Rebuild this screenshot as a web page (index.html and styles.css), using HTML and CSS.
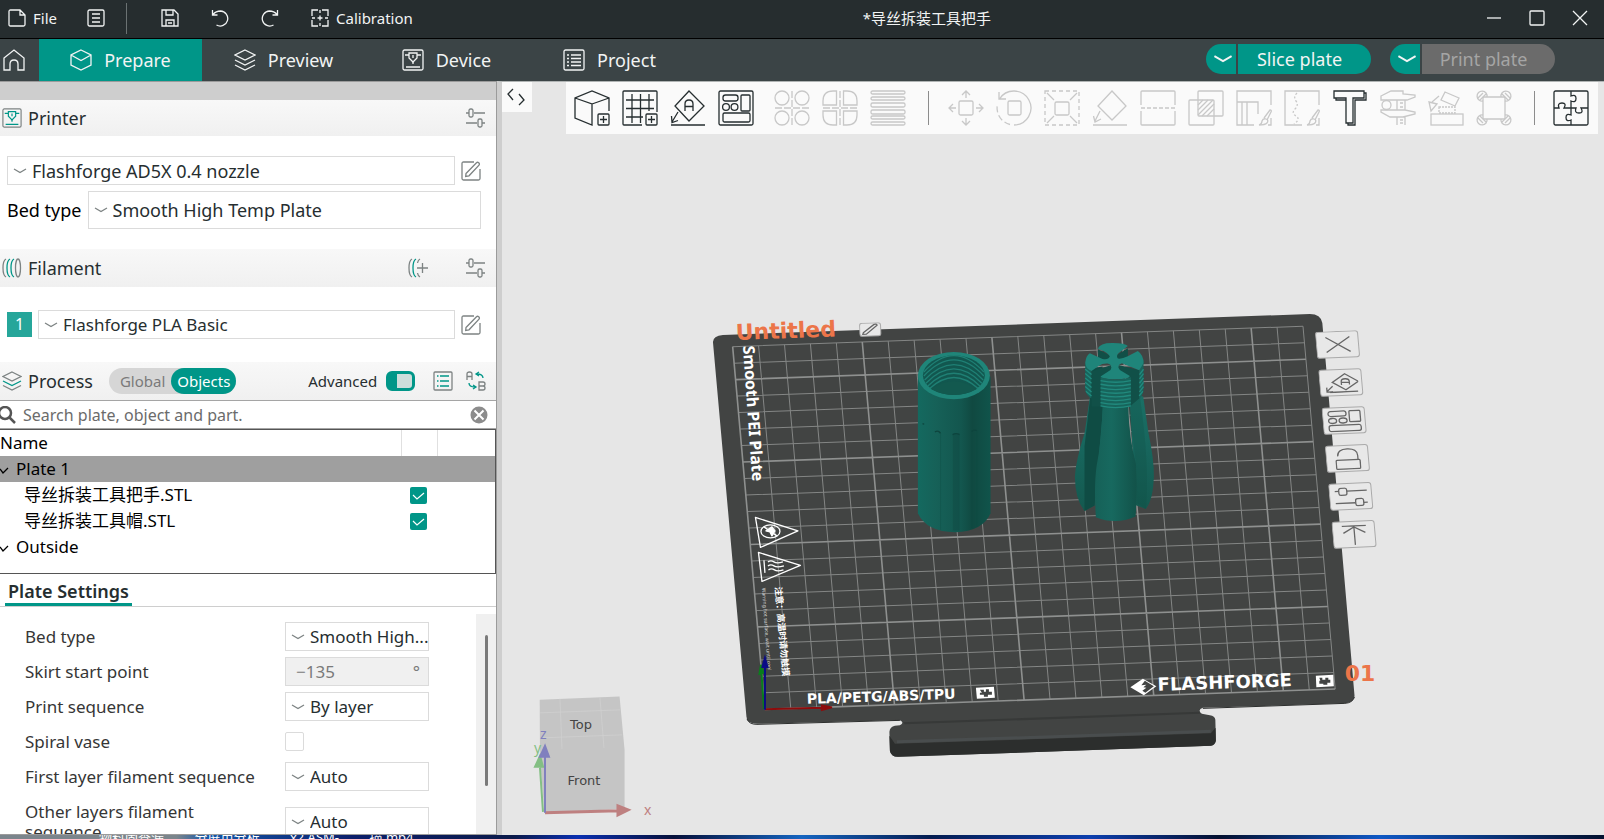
FILE: index.html
```html
<!DOCTYPE html>
<html lang="en">
<head>
    <meta charset="UTF-8">
    <meta name="viewport" content="width=device-width, initial-scale=1.0">
    <title>*导丝拆装工具把手</title>
    <link rel="stylesheet" href="styles.css">
</head>
<body>
<svg class="defs" aria-hidden="true">
    <symbol id="chevron" viewBox="0 0 14 8"><path d="M1 2l6 3.500L13 2"/></symbol>
    <symbol id="sliders" viewBox="0 0 20 20"><path d="M0 5h3M8 5h11M0 15h11M16 15h3"/><rect x="3" y="1" width="4" height="8" rx="1.500"/><rect x="12" y="11" width="4" height="8" rx="1.500"/></symbol>
    <symbol id="edit" viewBox="0 0 20 20"><path d="M13 1H2.500Q1 1 1 2.500v15Q1 19 2.500 19h15q1.500 0 1.500-1.500V8"/><path d="M5 12.500L15.500 1.800q1-1 2.200 0t.3 2.400L8 14.800l-3.300.6z"/></symbol>
    <symbol id="orient" viewBox="0 0 36 36"><path d="M19 1l15 15-15 15L5 16zM1 35h34M8 22l-6 10M1.500 26l.5 6.500 6-2"/><path d="M15 21v-7q0-4 4-4t4 4v7M15 16.500h8"/></symbol>
    <symbol id="arrange" viewBox="0 0 36 36"><rect x="1" y="1" width="34" height="34" rx="1.500"/><rect x="5" y="5" width="15" height="6" rx="2.500"/><rect x="23" y="5" width="9" height="16" rx="1"/><circle cx="8" cy="17" r="3.400"/><circle cx="16.500" cy="17" r="3.400"/><rect x="5" y="23" width="27" height="9" rx="1.500"/></symbol>
    <symbol id="printer" viewBox="0 0 22 22"><rect x="1" y="1" width="20" height="20" rx="1.500"/><g class="accent"><path d="M3 6h4M15 6h4M7 4h8v5l-4 4-4-4zM4 18h14"/><path d="M11 6v3M11 13v2"/></g></symbol>
</svg>

<header class="titlebar">
    <button class="menu-item"><svg class="icon" width="18" height="18" viewBox="0 0 18 18"><path d="M1 2.500Q1 1 2.500 1H12l5 5v9.500q0 1.500-1.500 1.500h-13Q1 17 1 15.500zM12 1v5h5"/></svg>File</button>
    <button class="menu-item list" aria-label="Menu"><svg class="icon" width="18" height="18" viewBox="0 0 18 18"><rect x="1" y="1" width="16" height="16" rx="1.500"/><path d="M5 5h8M5 9h8M5 13h8"/></svg></button>
    <span class="divider"></span>
    <div class="quick">
        <button aria-label="Save"><svg class="icon" width="18" height="18" viewBox="0 0 18 18"><path d="M1 1h12l4 4v12H1zM5 1v5h7V1M5 17v-6h8v6M7 14h4"/></svg></button>
        <button aria-label="Undo"><svg class="icon" width="18" height="18" viewBox="0 0 18 18"><path d="M1.500 1v5h5M2 5.500Q5 2 9.500 2a7.500 7.500 0 1 1-4 14"/></svg></button>
        <button aria-label="Redo"><svg class="icon" width="18" height="18" viewBox="0 0 18 18"><path d="M16.500 1v5h-5M16 5.500Q13 2 8.500 2a7.500 7.500 0 1 0 4 14"/></svg></button>
    </div>
    <button class="menu-item"><svg class="icon" width="18" height="18" viewBox="0 0 18 18"><path d="M7 1H1v6M11 1h6v6M7 17H1v-6M11 17h6v-6M9 1v3M9 14v3M1 9h3M14 9h3M9 6.500v5M6.500 9h5"/></svg>Calibration</button>
    <h1>*导丝拆装工具把手</h1>
    <div class="window-controls">
        <button aria-label="Minimize"><svg class="icon" width="16" height="16" viewBox="0 0 16 16"><path d="M1 8h14"/></svg></button>
        <button aria-label="Maximize"><svg class="icon" width="16" height="16" viewBox="0 0 16 16"><rect x="1" y="1" width="14" height="14" rx="1"/></svg></button>
        <button aria-label="Close"><svg class="icon" width="16" height="16" viewBox="0 0 16 16"><path d="M1 1l14 14M15 1L1 15"/></svg></button>
    </div>
</header>

<nav class="tabs">
    <button class="home" aria-label="Home"><svg class="icon" width="22" height="22" viewBox="0 0 22 22"><path d="M1 9l10-8 10 8v12h-6v-6q0-4-4-4t-4 4v6H1z"/></svg></button>
    <button class="tab active"><svg class="icon" width="22" height="22" viewBox="0 0 22 22"><path d="M11 1l10 5v10l-10 5-10-5V6zM1 6l10 5.500L21 6"/></svg>Prepare</button>
    <button class="tab"><svg class="icon" width="22" height="22" viewBox="0 0 22 22"><path d="M11 1l10 5-10 5L1 6zM1 11l10 5 10-5M1 16l10 5 10-5"/></svg>Preview</button>
    <button class="tab"><svg class="icon" width="22" height="22"><use href="#printer"/></svg>Device</button>
    <button class="tab"><svg class="icon" width="22" height="22" viewBox="0 0 22 22"><rect x="1" y="1" width="20" height="20" rx="1.500"/><path d="M4 6h2M8 6h10M4 9.500h2M8 9.500h10M4 13h2M8 13h10M4 16.500h2M8 16.500h10"/></svg>Project</button>
    <div class="actions">
        <div class="split">
            <button class="more" aria-label="Slice options"><svg class="icon" width="20" height="12"><use href="#chevron"/></svg></button>
            <button class="main">Slice plate</button>
        </div>
        <div class="split">
            <button class="more" aria-label="Print options"><svg class="icon" width="20" height="12"><use href="#chevron"/></svg></button>
            <button class="main" disabled>Print plate</button>
        </div>
    </div>
</nav>

<main class="workspace">
    <aside class="sidebar">
        <header class="section first">
            <svg class="icon" width="20" height="20"><use href="#printer"/></svg>
            <h2>Printer</h2>
            <button class="end" aria-label="Printer settings"><svg class="icon" width="20" height="20"><use href="#sliders"/></svg></button>
        </header>
        <div class="presets printer">
            <div class="row">
                <span class="combo"><svg class="icon" width="14" height="8"><use href="#chevron"/></svg><select aria-label="Printer preset"><option>Flashforge AD5X 0.4 nozzle</option></select></span>
                <button aria-label="Edit printer"><svg class="icon" width="20" height="20"><use href="#edit"/></svg></button>
            </div>
            <div class="row bed">
                <label for="bed">Bed type</label>
                <span class="combo tall"><svg class="icon" width="14" height="8"><use href="#chevron"/></svg><select id="bed"><option>Smooth High Temp Plate</option></select></span>
            </div>
        </div>

        <header class="section filament">
            <svg class="icon" width="20" height="20" viewBox="0 0 20 20"><path d="M4 1C0 3 0 17 4 19"/><path class="accent" d="M8 1C4 3 4 17 8 19M12 1C8 3 8 17 12 19"/><ellipse cx="16" cy="10" rx="2.500" ry="9"/></svg>
            <h2>Filament</h2>
            <button class="end" aria-label="Add filament"><svg class="icon" width="20" height="20" viewBox="0 0 20 20"><path d="M4 1C0 3 0 17 4 19M12 1q-2 1-2.500 4M12 19q-2-1-2.500-4M9 10h11M14.500 5v10"/><path class="accent" d="M8 1C4 3 4 17 8 19"/></svg></button>
            <button class="far" aria-label="Filament settings"><svg class="icon" width="20" height="20"><use href="#sliders"/></svg></button>
        </header>
        <div class="presets">
            <div class="row">
                <span class="badge">1</span>
                <span class="combo"><svg class="icon" width="14" height="8"><use href="#chevron"/></svg><select aria-label="Filament preset"><option>Flashforge PLA Basic</option></select></span>
                <button aria-label="Edit filament"><svg class="icon" width="20" height="20"><use href="#edit"/></svg></button>
            </div>
        </div>

        <header class="section process">
            <svg class="icon" width="20" height="20" viewBox="0 0 20 20"><path d="M10 1l9 4.500-9 4.500-9-4.500zM1 14.500l9 4.500 9-4.500"/><path class="accent" d="M1 10l9 4.500 9-4.500"/></svg>
            <h2>Process</h2>
            <div class="scope"><button>Global</button><button class="on">Objects</button></div>
            <label class="end advanced">Advanced <input type="checkbox" checked></label>
            <button class="list" aria-label="Parameter list"><svg class="icon" width="20" height="20" viewBox="0 0 20 20"><rect x="1" y="1" width="18" height="18" rx="1"/><path class="accent" d="M4 5h1.500M7 5h9M4 10h1.500M7 10h9M4 15h1.500M7 15h9"/></svg></button>
            <button class="compare" aria-label="Compare presets"><svg class="icon" width="20" height="20" viewBox="0 0 20 20"><path d="M1 9V3q0-2 2.500-2T6 3v6M1 5.500h5M13 11h4q2 0 2 2t-2 2h-4zM13 15h4q2 0 2 2t-2 2h-4z"/><path class="accent" d="M17 7q0-4-6-4M13 1l-3 2 3 2M3 12q0 4 6 4M7 14l3 2-3 2"/></svg></button>
        </header>

        <div class="search">
            <svg class="icon" width="18" height="18" viewBox="0 0 18 18"><circle cx="7" cy="7" r="6"/><path d="M11 11l6 6"/></svg>
            <input type="text" placeholder="Search plate, object and part." aria-label="Search">
            <button aria-label="Clear"><svg class="icon" width="20" height="20" viewBox="0 0 20 20"><circle cx="10" cy="10" r="9.500"/><path d="M5.500 5.500l9 9M14.500 5.500l-9 9"/></svg></button>
        </div>

        <div class="tree">
            <table>
                <thead>
                <tr><th>Name</th><th class="col-print"></th><th class="col-edit"></th></tr>
                </thead>
                <tbody>
                <tr class="selected"><td class="group"><svg class="icon" width="9" height="8" viewBox="0 0 9 8"><path d="M0 2l3 4 5-5"/></svg>Plate 1</td><td></td><td></td></tr>
                <tr><td class="object">导丝拆装工具把手.STL</td><td><input type="checkbox" checked aria-label="Print 导丝拆装工具把手.STL"></td><td></td></tr>
                <tr><td class="object">导丝拆装工具帽.STL</td><td><input type="checkbox" checked aria-label="Print 导丝拆装工具帽.STL"></td><td></td></tr>
                <tr><td class="group"><svg class="icon" width="9" height="8" viewBox="0 0 9 8"><path d="M0 2l3 4 5-5"/></svg>Outside</td><td></td><td></td></tr>
                </tbody>
            </table>
        </div>

        <div class="settings-tabs"><button>Plate Settings</button></div>
        <div class="settings">
            <div class="fields">
                <label for="s-bed">Bed type</label>
                <span class="combo"><svg class="icon" width="14" height="8"><use href="#chevron"/></svg><select id="s-bed"><option>Smooth High...</option></select></span>
                <label for="s-skirt">Skirt start point</label>
                <span class="combo off"><input id="s-skirt" type="text" value="−135" disabled><span class="unit">°</span></span>
                <label for="s-seq">Print sequence</label>
                <span class="combo"><svg class="icon" width="14" height="8"><use href="#chevron"/></svg><select id="s-seq"><option>By layer</option></select></span>
                <label for="s-vase">Spiral vase</label>
                <input id="s-vase" type="checkbox">
                <label for="s-first">First layer filament sequence</label>
                <span class="combo"><svg class="icon" width="14" height="8"><use href="#chevron"/></svg><select id="s-first"><option>Auto</option></select></span>
                <label for="s-other">Other layers filament sequence</label>
                <span class="combo"><svg class="icon" width="14" height="8"><use href="#chevron"/></svg><select id="s-other"><option>Auto</option></select></span>
            </div>
            <div class="scrollbar"><span></span></div>
        </div>
    </aside>

    <section class="viewport">
        <svg class="scene" viewBox="502 82 1102 752" preserveAspectRatio="xMinYMin meet">
            <defs>
                <linearGradient id="tube"><stop offset="0" stop-color="#14695f"/><stop offset=".25" stop-color="#166158"/><stop offset=".6" stop-color="#13564e"/><stop offset=".75" stop-color="#104941"/><stop offset="1" stop-color="#10544b"/></linearGradient>
                <linearGradient id="grip"><stop offset="0" stop-color="#166158"/><stop offset=".4" stop-color="#17695f"/><stop offset="1" stop-color="#125249"/></linearGradient>
                <linearGradient id="wing" x2="0" y2="1"><stop offset="0" stop-color="#1a7066"/><stop offset=".5" stop-color="#17655c"/><stop offset="1" stop-color="#14594f"/></linearGradient>
            </defs>

            <!-- build plate -->
            <path fill="#424443" d="M713 342Q713 336 723 335L1310 314Q1321 314 1322.500 323L1354.700 696Q1354 703 1345 703.500L1203 708Q1197 710 1202 714L1210 715.500Q1215 716 1215.500 720L1216 741Q1215 745.500 1211 746L898 757Q891 757 890 751L889.500 732Q890 727 895 726L900 725.500Q905 723 900 720.300L757 724Q747 724 746.500 717z"/>
            <path fill="#373938" d="M903 722.500L1200 712v2L905 724.500z"/>
            <path fill="#2c2e2d" d="M889.500 736L895 744 1211 733.500 1215.700 728 1216 741Q1215 745.500 1211 746L898 757Q891 757 890 751z"/>
            <path fill="none" stroke="#494d4e" stroke-width="3" d="M897 742L1211 731.500"/>
            <path fill="none" stroke="#2c2e2d" d="M747 719Q749 724.500 757 724.500L900 720.500M1203 708.500L1345 703.500Q1353 703 1354.700 697"/>

            <!-- 10 mm grid, 22 x 22 cells -->
            <g class="grid" transform="matrix(25.930 -.927 1.464 16.490 732.700 346.700)">
                <path d="M0 0H22M0 1H22M0 3H22M0 4H22M0 5H22M0 6H22M0 8H22M0 9H22M0 10H22M0 11H22M0 13H22M0 14H22M0 15H22M0 16H22M0 18H22M0 19H22M0 20H22M0 21H22"/>
                <path d="M1 0V22M2 0V22M3 0V22M4 0V22M6 0V22M7 0V22M8 0V22M9 0V22M11 0V22M12 0V22M13 0V22M14 0V22M16 0V22M17 0V22M18 0V22M19 0V22M21 0V22M22 0V22"/>
                <path class="bold" d="M0 2H22M0 7H22M0 12H22M0 17H22M0 22H22M0 0V22M5 0V22M10 0V22M15 0V22M20 0V22"/>
            </g>

            <text class="plate-name" transform="translate(736 340) rotate(-2)">Untitled</text>
            <text class="plate-number" x="1345" y="681">01</text>
            <text class="plate-type" transform="translate(743 346) rotate(86)">Smooth PEI Plate</text>
            <text class="plate-materials" transform="translate(807 704) rotate(-2)">PLA/PETG/ABS/TPU</text>
            <text class="plate-brand" transform="translate(1158 691) rotate(-2)">FLASHFORGE</text>
            <text class="warning-zh" transform="translate(775 587) rotate(85)">注意：高温时请勿触摸</text>
            <text class="warning-en" transform="translate(762 588) rotate(86)">Warning hot surface, wait until cool</text>

            <!-- warning triangles -->
            <g fill="none" stroke="#fff" stroke-width="1.300" stroke-linejoin="round">
                <path d="M755.500 517.500L798 531 760.500 547.500z"/>
                <ellipse cx="770.500" cy="531.500" rx="9.500" ry="6.500"/>
                <path d="M764 527l13 9"/>
                <path fill="#fff" d="M766 531l6-4 3 4-3 5-2-4z"/>
                <path d="M758.500 552.500L800.500 565.500 762 581.500z"/>
                <path d="M764 560.500l1 12.500M768 562q3-2 6 0t9 0M768 566q3-2 6 0t10 0M768.500 570q3-2 6 0t9 0"/>
            </g>
            <!-- corner marks and brand diamond -->
            <g fill="#fff">
                <path d="M976 688l18-1 1 11-18 1zM1316 676l17.500-1 .5 11.500-17.500 1z"/>
                <path d="M1130.500 687.500L1143 679 1156.500 686.500 1144 695.500z"/>
                <path fill="#424443" d="M1145 681l9 5.500-8.500 6.500-3-2 4-3-3-.5 3-2.500-5 .5z"/>
                <path fill="#424443" d="M980 690h4v2h2v-2.500h3v2.500h3v3h-4v2h-4v-2h-4v-2h2zM1319.500 678h3v2h3v-2h3v2h2v3h-3v2h-4v-1h-4v-3h1z"/>
            </g>

            <!-- sleeve -->
            <g transform="translate(700 300) scale(.3333)">
                <path fill="url(#tube)" d="M654 230V640Q680 696 766 697 850 694 872 640V230z"/>
                <ellipse cx="762" cy="227" rx="108" ry="71" fill="#1f8579"/>
                <ellipse cx="762" cy="226" rx="93" ry="59" fill="#12574f"/>
                <g fill="none" stroke="#1f7f74" stroke-width="4">
                    <path d="M672 216Q762 118 852 216M672 228Q762 132 852 228M674 240Q762 148 850 240M678 250Q762 164 846 250M684 258Q762 182 840 258M690 265Q762 200 834 265"/>
                </g>
                <path fill="#13594f" d="M694 268Q762 220 830 268 762 303 694 268z"/>
                <path fill="#0e453e" d="M759 402q10-4 20 0v290h-20z" opacity=".35"/>
                <path fill="none" stroke="#0e453e" stroke-width="4" d="M705 396q10-6 17 4M758 404q11-6 21 0M815 394q10-6 16-2M668 371l5 2"/>
                <path fill="none" stroke="#0f4a42" stroke-width="3" opacity=".35" d="M722 400V690M830 394V680M816 396V684"/>
            </g>

            <!-- handle -->
            <g transform="translate(1040 300) scale(.3333)">
                <path fill="url(#wing)" d="M152 280L134 400Q108 480 105 530 106 600 134 633L166 616 200 290z"/>
                <path fill="#0f4c44" d="M156 205L150 300 134 440V633L164 617 190 320 188 200z"/>
                <path fill="url(#wing)" d="M268 280L310 290 326 400Q343 480 342 530 340 600 318 627L288 616z"/>
                <path fill="#104f47" d="M264 320L280 420 291 520 292 610 318 627Q330 500 300 290z" opacity=".3"/>
                <path fill="url(#grip)" d="M188 320H265Q268 420 288 490 294 560 287 650 228 676 168 652 162 560 170 500 186 420 188 320z"/>
                <path fill="#17655c" d="M136 190L155 214V296Q142 290 136 272zM311 180L298 210V298Q310 285 311 270z"/>
                <path fill="#115048" d="M155 214L215 195V220L182 236V320H155zM298 210L235 195V215L270 236V320L298 296z"/>
                <path fill="#114f47" d="M174 148L220 172 264 145V176L220 190 174 176z"/>
                <path fill="#1f857a" d="M174 146Q180 128 220 129 255 129 264 138L236 160Q228 168 234 176 246 178 262 170L294 153Q312 166 311 190L298 211 246 190Q228 196 240 210L270 228Q268 238 226 238 184 238 182 230L212 210Q220 196 204 191 188 190 176 198L155 213Q136 206 136 188 138 168 150 160L188 177Q206 180 210 170 204 158 174 146z"/>
                <path fill="#17655c" d="M182 232Q226 246 273 232V318Q226 332 182 318z"/>
                <g fill="none" stroke="#218a7e" stroke-width="4">
                    <path d="M182 242Q227 252 273 242M182 253Q227 263 273 253M182 264Q227 274 273 264M182 275Q227 285 273 275M182 286Q227 296 273 286M182 297Q227 307 273 297M182 308Q227 318 273 308M182 318Q227 328 273 318"/>
                    <path d="M136 208l19 16M136 221l19 16M136 234l19 16M136 247l19 16M136 260l19 16M138 274l17 14M311 208l-12 16M311 221l-12 16M311 234l-12 16M311 247l-12 16M311 260l-12 16M309 274l-11 14"/>
                </g>
            </g>

            <!-- plate axes -->
            <g stroke-width="2">
                <path stroke="#0a7d1c" fill="#0a7d1c" d="M764 709L761.500 673M759.500 674l4-1-2.500-8z"/>
                <path stroke="#8c0c0c" fill="#8c0c0c" d="M765 709.500L822 708M822 705.500v4.500l10-2.500z"/>
                <path stroke="#0b0b86" fill="#0b0b86" d="M765 710V667M762.500 667h5l-2.500-9z"/>
            </g>

            <!-- view cube -->
            <path fill="#c5c5c5" d="M539.700 700L619.600 696.700 624.600 750V809L544.600 813 540 760z"/>
            <path fill="none" stroke="#cfcfcf" stroke-width=".8" d="M540 713l80-3M542 738l80-3M560 699l2 50M600 698l4 50"/>
            <g class="cube-labels"><text x="581" y="729">Top</text><text x="584" y="785">Front</text></g>
            <g stroke-width="2">
                <path stroke="#84bf84" fill="#84bf84" d="M543 812L540 768M535 767h8l-3-11z"/>
                <path stroke="#be8080" fill="#be8080" stroke-width="3" d="M545 813L618 811M618 806v9l10-5z"/>
                <path stroke="#8080be" fill="#8080be" d="M545 813V757M540 757h9l-4-11z"/>
            </g>
            <text class="axis" fill="#8080be" x="540" y="739">z</text>
            <text class="axis" fill="#84bf84" x="534" y="753">y</text>
            <text class="axis" fill="#be8080" x="644" y="815">x</text>

            <foreignObject x="859" y="323" width="26" height="18" transform="rotate(-2 858 322)">
                <button class="rename" aria-label="Rename plate"><svg class="icon" width="18" height="12" viewBox="0 0 18 12"><path d="M2 9L13 1q3-1 3 1L5 10.500H1.500z"/></svg></button>
            </foreignObject>
            <foreignObject width="46" height="224" transform="matrix(1 -.045 .087 1 1315 332)">
                <div class="plate-tools">
                    <button aria-label="Delete plate"><svg class="icon" width="26" height="17" viewBox="0 0 26 17"><path d="M1 1l24 15M25 1L1 16"/></svg></button>
                    <button aria-label="Orient"><svg class="icon" width="34" height="20" viewBox="0 0 34 20"><path d="M21 1l13 8-13 8-13-8zM5 19h28M8 13l-6 5M2 14v4.500h6M17 12V8.500Q17 6 21 6t4 2.500V12M17 9.500h8"/></svg></button>
                    <button aria-label="Arrange"><svg class="icon" width="36" height="22" viewBox="0 0 36 22"><rect x="2" y="1" width="18" height="5" rx="2.500"/><rect x="23" y="1" width="11" height="11" rx="1"/><ellipse cx="6" cy="10.500" rx="4" ry="2.500"/><ellipse cx="16.500" cy="10.500" rx="4" ry="2.500"/><rect x="2" y="15" width="32" height="6" rx="2"/></svg></button>
                    <button aria-label="Lock"><svg class="icon" width="26" height="22" viewBox="0 0 26 22"><rect x="1" y="12" width="24" height="9" rx="1"/><path d="M3 8Q3 1 13 1t10 7v4"/></svg></button>
                    <button aria-label="Plate settings"><svg class="icon" width="34" height="20" viewBox="0 0 34 20"><path d="M1 4h4M13 4h20M1 16h20M29 16h4"/><rect x="5" y="1" width="8" height="7" rx="2"/><rect x="21" y="12" width="8" height="7" rx="2"/></svg></button>
                    <button aria-label="Move to front"><svg class="icon" width="26" height="20" viewBox="0 0 26 20"><path d="M1 1h24M13 1v19M2 8l11-6 11 6"/></svg></button>
                </div>
            </foreignObject>
        </svg>

        <button class="collapse" aria-label="Collapse sidebar"><svg class="icon" width="18" height="18" viewBox="0 0 18 18"><path d="M6 1L1 6l5 6M12 6l5 6-5 5"/></svg></button>
        <div class="toolbar">
            <button aria-label="Add"><svg class="icon" viewBox="0 0 36 36"><path d="M35 21V8L18 1 1 8v20l17 7V14L1 8M18 14l17-6"/><rect x="24" y="24" width="11" height="11" rx="1"/><path d="M29.500 26v7M26 29.500h7"/></svg></button>
            <button aria-label="Add plate"><svg class="icon" viewBox="0 0 36 36"><path d="M20 35H2q-1 0-1-1V2q0-1 1-1h32q1 0 1 1v20M10 4v29M18.500 4v29M27 4v17M4 10h28M4 18.500h28M4 27h17"/><rect x="24" y="24" width="11" height="11" rx="1"/><path d="M29.500 26v7M26 29.500h7"/></svg></button>
            <button aria-label="Auto orient"><svg class="icon"><use href="#orient"/></svg></button>
            <button class="wide" aria-label="Arrange"><svg class="icon"><use href="#arrange"/></svg></button>
            <button disabled aria-label="Split to objects"><svg class="icon" viewBox="0 0 36 36"><circle cx="8" cy="8" r="7"/><circle cx="28" cy="8" r="7"/><circle cx="8" cy="28" r="7"/><circle cx="28" cy="28" r="7"/><path d="M18 1v34M1 18h34" stroke-dasharray="7 2"/></svg></button>
            <button disabled aria-label="Split to parts"><svg class="icon" viewBox="0 0 36 36"><path d="M14.500 1v14H1v-4Q1 1 11 1zM21.500 1v14H35v-4Q35 1 25 1zM14.500 35V21H1v4q0 10 10 10zM21.500 35V21H35v4q0 10-10 10z"/><path d="M18 1v34M1 18h34" stroke-dasharray="7 2"/></svg></button>
            <button disabled aria-label="Variable layer height"><svg class="icon" viewBox="0 0 36 36"><rect x="1" y="1" width="34" height="3" rx="1.500"/><rect x="1" y="7" width="34" height="3" rx="1.500"/><rect x="1" y="13" width="34" height="4" rx="1.500"/><rect x="1" y="20" width="34" height="4" rx="1.500"/><rect x="1" y="26" width="34" height="3" rx="1.500"/><rect x="1" y="32" width="34" height="3" rx="1.500"/></svg></button>
            <span class="divider"></span>
            <button disabled aria-label="Move"><svg class="icon" viewBox="0 0 36 36"><rect x="11" y="11" width="14" height="14" rx="1.500"/><path d="M18 8V1M14 5l4-4 4 4M18 28v7M14 31l4 4 4-4M8 18H1M5 14l-4 4 4 4M28 18h7M31 14l4 4-4 4"/></svg></button>
            <button disabled aria-label="Rotate"><svg class="icon" viewBox="0 0 36 36"><rect x="12" y="11" width="13" height="14" rx="1.500"/><path d="M3 2v7h7M3.500 9A17 17 0 1 1 18 35"/><path d="M14 34.500A17 17 0 0 1 1.500 14" stroke-dasharray="6 3"/></svg></button>
            <button disabled aria-label="Scale"><svg class="icon" viewBox="0 0 36 36"><rect x="11" y="12" width="14" height="13" rx="1.500"/><rect x="1" y="1" width="34" height="34" stroke-dasharray="4 3"/><path d="M3 3l7 7M33 3l-7 7M3 33l7-7M33 33l-7-7"/></svg></button>
            <button disabled aria-label="Lay on face"><svg class="icon" viewBox="0 0 36 36"><path d="M20 1l14 15-14 14L6 16zM1 35h34M8 21L3 31M1.500 26l1.500 6 6-3"/></svg></button>
            <button disabled aria-label="Cut"><svg class="icon" viewBox="0 0 36 36"><path d="M1 15V2q0-1 1-1h32q1 0 1 1v13M1 21v13q0 1 1 1h32q1 0 1-1V21"/><path d="M1 18h34" stroke-dasharray="4 2"/></svg></button>
            <button disabled aria-label="Mesh boolean"><svg class="icon" viewBox="0 0 36 36"><rect x="10" y="1" width="25" height="25" rx="1"/><rect x="1" y="10" width="25" height="25" rx="1"/><path d="M10 15l5-5M10 20l10-10M10 25L25 10M14 26l12-12M19 26l7-7"/></svg></button>
            <button disabled aria-label="Support painting"><svg class="icon" viewBox="0 0 36 36"><path d="M18 35H1V1h34v14M1 12h21v12M6 12v23M11 12v23M35 28v7h-3M23 35q3-1 3-4 1-3 4-2t1 4q-2 2-8 2zM28 28l6-8q2 0 1 2l-4 8"/></svg></button>
            <button disabled aria-label="Seam painting"><svg class="icon" viewBox="0 0 36 36"><path d="M18 35H1V1h34v14M35 28v7h-3M23 35q3-1 3-4 1-3 4-2t1 4q-2 2-8 2zM28 28l6-8q2 0 1 2l-4 8"/><path d="M13 3q-4 4-1 8t-1 8 1 7-2 8" stroke-dasharray="2 2"/></svg></button>
            <button aria-label="Text"><svg class="icon" viewBox="0 0 36 36"><path d="M2 1h30v7H21v25h-7V8H2z"/><path d="M32 3h2v7H23v25h-7v-2M4 8v2h10"/></svg></button>
            <button disabled aria-label="Measure"><svg class="icon" viewBox="0 0 36 36"><path d="M1 6l10-5h12v3l12 1v2l-8 3H1zM1 20h24l10 2v2l-12 3H10L1 22zM17 10v10M25 10v10M17 27v8M25 27v8M20 13h3M20 17h3M20 30h3M20 33h3"/><circle cx="6.500" cy="15" r="4.500"/></svg></button>
            <button disabled aria-label="Assemble faces"><svg class="icon" viewBox="0 0 36 36"><rect x="3" y="24" width="32" height="11"/><path d="M17 2l14 6-4 8-14-6zM1 12l8 2-6 7zM4 12l7-6"/><path d="M11 17h16v6H11z" stroke-dasharray="2 1"/></svg></button>
            <button disabled aria-label="Brim ears"><svg class="icon" viewBox="0 0 36 36"><rect x="7" y="7" width="22" height="22" rx="1"/><path d="M7 11A5 5 0 1 1 11 7M25 7a5 5 0 1 1 4 4M29 25a5 5 0 1 1-4 4M11 29a5 5 0 1 1-4-4M2 8l5-5M4 10l6-6M29 3l5 5M26 4l6 6M34 28l-5 5M32 26l-6 6M2 28l5 5M4 26l6 6"/></svg></button>
            <span class="divider"></span>
            <button aria-label="Assembly view"><svg class="icon" viewBox="0 0 36 36"><rect x="1" y="1" width="34" height="34" rx="1.500"/><path d="M18 1v5q5-2 5 2.500T18 11v14q-5-2-5 2.500t5 2.500v5M1 18h5q-2-5 3-5t2 5h12q-2 5 3 5t2-5h7"/></svg></button>
        </div>
    </section>
</main>
<footer class="desktop">
    <span>物料固查漏...</span><span>分屏用分析...</span><span>x2 ASM-...</span><span>描.mp4</span>
</footer>
</body>
</html>
```
FILE: styles.css
```css
* {
    box-sizing: border-box;
}

body {
    margin: 0;
    height: 100vh;
    display: grid;
    grid-template-rows: 39px 42px minmax(0, 1fr) 4px;
    overflow: hidden;
    font-family: "Noto Sans", "Noto Sans CJK SC", sans-serif;
    font-size: 17px;
    line-height: 24px;
    color: #262e30;
    background: #fff;
}

h1, h2 {
    margin: 0;
    font-weight: 400;
}

button, select, input {
    font: inherit;
    color: inherit;
}

button {
    display: flex;
    align-items: center;
    justify-content: center;
    padding: 0;
    border: none;
    background: none;
    cursor: pointer;
}

.defs {
    position: absolute;
    width: 0;
    height: 0;
}

.icon {
    flex: none;
    fill: none;
    stroke: currentColor;
    stroke-width: 1.3;
}

/* title bar */
.titlebar {
    display: flex;
    align-items: center;
    padding: 0 16px 2px 8px;
    background: #262d2f;
    border-bottom: 1px solid #000;
    color: #f2f4f4;
    font-size: 15px;
}

.menu-item {
    gap: 7px;
}

.menu-item.list {
    margin-left: 30px;
}

.titlebar .divider {
    width: 1px;
    height: 31px;
    margin: 0 34px 0 21px;
    background: #6b7273;
}

.quick {
    display: flex;
    gap: 32px;
    margin-right: 32px;
}

.titlebar h1 {
    flex: 1;
    padding-left: 450px;
    font-size: 15px;
}

.window-controls {
    display: flex;
    gap: 27px;
}

/* main tabs */
.tabs {
    display: flex;
    align-items: stretch;
    background: #3b4446;
    color: #f2f4f4;
    font-size: 18px;
}

.home {
    width: 39px;
    padding-right: 11px;
}

.tab {
    width: 163px;
    gap: 12px;
}

.tab.active {
    background: #009688;
}

.actions {
    display: flex;
    align-items: center;
    gap: 19px;
    margin-left: auto;
    padding: 0 49px 2px 0;
}

.split {
    display: flex;
    gap: 2px;
}

.split button {
    height: 30px;
    background: #009688;
}

.split .more {
    width: 30px;
    padding-left: 4px;
    border-radius: 15px 0 0 15px;
}

.split .main {
    width: 133px;
    padding-right: 10px;
    border-radius: 0 15px 15px 0;
}

.split .main:disabled {
    background: #6b6b6b;
    color: #a5a5a5;
}

/* layout */
.workspace {
    display: flex;
    min-height: 0;
}

.sidebar {
    flex: 0 0 31%;
    display: flex;
    flex-direction: column;
    min-width: 0;
    border: 1px solid #9b9b9b;
    border-left: none;
    background: #fff;
}

.section {
    flex: none;
    display: flex;
    align-items: center;
    height: 38px;
    padding: 0 10px 0 2px;
    background: linear-gradient(#f8f8f8, #f0f0f0);
}

.section.first {
    height: 54px;
    border-top: 18px solid #cecece;
}

.section h2 {
    margin-left: 6px;
    font-size: 18px;
}

.section .icon, .row .icon {
    color: #7d8383;
}

.accent {
    stroke: var(--accent, currentColor);
}

.section {
    --accent: #009688;
}

.end {
    margin-left: auto;
}

.far {
    margin-left: 38px;
}

.presets {
    padding: 23px 15px 23px 7px;
}

.presets.printer {
    padding-top: 20px;
    padding-bottom: 20px;
    font-size: 18px;
}

.row {
    display: flex;
    align-items: center;
    gap: 6px;
}

.row.bed {
    margin-top: 6px;
    color: #000;
}

.combo {
    flex: 1;
    display: flex;
    align-items: center;
    min-width: 0;
    height: 29px;
    padding-left: 5px;
    border: 1px solid #dbdbdb;
    background: #fff;
    color: #262e30;
}

.combo.tall {
    height: 38px;
}

.combo .icon {
    color: #7d8383;
}

.combo select, .combo input {
    flex: 1;
    min-width: 0;
    height: 27px;
    padding: 0 0 0 5px;
    border: none;
    background: none;
    appearance: none;
    outline: none;
}

.badge {
    width: 25px;
    height: 25px;
    background: #26a69a;
    color: #fff;
    font-size: 16px;
    text-align: center;
}

.scope {
    display: flex;
    margin-left: 16px;
    border-radius: 13px;
    background: #d6d6d6;
    font-size: 15px;
}

.scope button {
    height: 26px;
    padding: 0 6px 0 11px;
    color: #7a7a7a;
}

.scope .on {
    padding: 0 6px;
    border-radius: 13px;
    background: #009688;
    color: #fff;
}

.advanced {
    display: flex;
    align-items: center;
    gap: 9px;
    font-size: 15px;
}

.advanced input {
    appearance: none;
    width: 29px;
    height: 20px;
    margin: 0;
    border: 3px solid #009688;
    border-left-width: 11px;
    border-radius: 6px;
    background: #cddedb;
}

.section .list {
    margin-left: 18px;
}

.section .compare {
    margin-left: 13px;
}

/* object list */
.search {
    display: flex;
    align-items: center;
    height: 29px;
    padding-right: 7px;
    border-top: 1px solid #a5a5a5;
    border-bottom: 1px solid #a5a5a5;
    flex: none;
}

.search > .icon {
    margin-left: -2px;
    color: #555;
    stroke-width: 2.5;
}

.search input {
    flex: 1;
    padding: 0 7px;
    border: none;
    outline: none;
    font-size: 16px;
}

.search input::placeholder {
    color: #6b6b6b;
}

.search button .icon {
    fill: #8c8c8c;
    stroke: #fff;
    stroke-width: 2;
}

.tree {
    flex: none;
    height: 145px;
    border: 1px solid #555;
    border-left: none;
    color: #000;
}

.tree table {
    width: 100%;
    table-layout: fixed;
    border-collapse: collapse;
}

.tree tr {
    height: 26px;
}

.tree th, .tree td {
    padding: 0;
    font-weight: 400;
    text-align: left;
    line-height: 24px;
}

.tree .col-print {
    width: 36px;
    border: solid #e0e0e0;
    border-width: 0 1px;
}

.tree .col-edit {
    width: 58px;
}

.tree .selected {
    background: #9f9f9f;
}

.tree .group .icon {
    margin-right: 7px;
}

.tree .object {
    padding-left: 24px;
}

input[type="checkbox"]:not(.advanced input) {
    display: block;
    appearance: none;
    width: 19px;
    height: 19px;
    margin: 0;
    border: 1px solid #dbdbdb;
    border-radius: 2px;
    background: #fff;
}

.tree input[type="checkbox"]:not(.advanced input) {
    width: 17px;
    height: 17px;
    margin-left: 9px;
    border: none;
    background: #009688 url("data:image/svg+xml,%3Csvg xmlns='http://www.w3.org/2000/svg' viewBox='0 0 17 17'%3E%3Cpath d='M3 8l4 4 7-6' fill='none' stroke='white' stroke-width='1.2'/%3E%3C/svg%3E");
}

/* plate settings */
.settings-tabs {
    flex: none;
    height: 33px;
    padding-left: 5px;
    border-bottom: 1px solid #cecece;
}

.settings-tabs button {
    height: 32px;
    padding: 4px 3px 0;
    border-bottom: 3px solid #009688;
    font-size: 18px;
    font-weight: 600;
}

.settings {
    flex: 1;
    display: flex;
    justify-content: space-between;
    min-height: 0;
    padding-top: 7px;
    overflow: hidden;
}

.fields {
    display: grid;
    grid-template-columns: 260px 144px;
    grid-auto-rows: 29px;
    align-items: center;
    row-gap: 6px;
    padding: 8px 0 0 25px;
}

.fields label {
    line-height: 20px;
    padding-right: 40px;
    color: #363636;
}

.fields label[for="s-first"] {
    padding-right: 0;
}

.fields label[for="s-other"], .fields label[for="s-other"] + .combo {
    margin-top: 20px;
}

.combo.off {
    background: #f0f0f0;
    color: #7a7a7a;
}

.unit {
    padding-right: 8px;
}

.scrollbar {
    width: 20px;
    padding: 21px 8px 0 9px;
    background: #f0f0f0;
}

.scrollbar span {
    display: block;
    height: 151px;
    border-radius: 2px;
    background: #7a7a7a;
}

/* 3D view */
.viewport {
    position: relative;
    flex: 1;
    min-width: 0;
    border-left: 5px solid #cecece;
    border-top: 1px solid #b0b4b4;
    background: #e6e6e6;
    overflow: hidden;
}

.scene {
    display: block;
    width: 100%;
    height: 100%;
}

.collapse {
    position: absolute;
    top: 0;
    left: 0;
    width: 30px;
    height: 30px;
    padding-right: 2px;
    background: #fafafa;
}

.toolbar {
    position: absolute;
    top: 0;
    left: 64px;
    right: 6px;
    display: flex;
    align-items: center;
    gap: 12px;
    height: 52px;
    padding: 0 9px 0 8px;
    background: #fafafa;
}

.toolbar .icon {
    width: 36px;
    height: 36px;
}

.toolbar button:disabled {
    color: #c8c8c8;
}

.toolbar .wide {
    margin-right: 8px;
}

.toolbar .divider {
    width: 1px;
    height: 34px;
    margin: 0 7px 0 10px;
    background: #8c8c8c;
}

.grid {
    fill: none;
    stroke: #848685;
}

.grid path {
    vector-effect: non-scaling-stroke;
}

.grid .bold {
    stroke: #8e908f;
    stroke-width: 1.6;
}

.plate-name, .plate-number {
    font: bold 22px "DejaVu Sans", sans-serif;
    fill: #ec7549;
}

.plate-type {
    font-size: 16px;
    font-weight: 700;
    fill: #fff;
}

.plate-materials {
    font: bold 14px "DejaVu Sans", sans-serif;
    fill: #fff;
}

.plate-brand {
    font: bold 18px "DejaVu Sans", sans-serif;
    fill: #fff;
}

.warning-zh {
    font-size: 9px;
    font-weight: 700;
    fill: #fff;
}

.warning-en {
    font-size: 5px;
    fill: #ddd;
}

.cube-labels {
    font: 13px "DejaVu Sans", sans-serif;
    text-anchor: middle;
    fill: #444;
}

.axis {
    font-size: 14px;
}

.plate-tools {
    display: grid;
    gap: 11px;
}

.plate-tools button, .rename {
    width: 43px;
    height: 27px;
    border: 1px solid #aaa;
    border-radius: 3px;
    background: #e8e8e8;
    color: #666;
}

.rename {
    width: 22px;
    height: 14px;
}

.desktop {
    display: flex;
    gap: 20px;
    padding-left: 99px;
    overflow: hidden;
    background: linear-gradient(to right, #7b858c 0, #7b858c 11%, #1456a8 13%, #0c1f6b 22%, #0b1a4a 32%, #0a2fb0 36%, #06103a 42%, #1565c0 50%, #041c50 58%, #0d3fae 68%, #041030 76%, #0f58c4 86%, #03102e 100%);
    color: #fff;
    font-size: 13px;
    line-height: 4px;
}
```
